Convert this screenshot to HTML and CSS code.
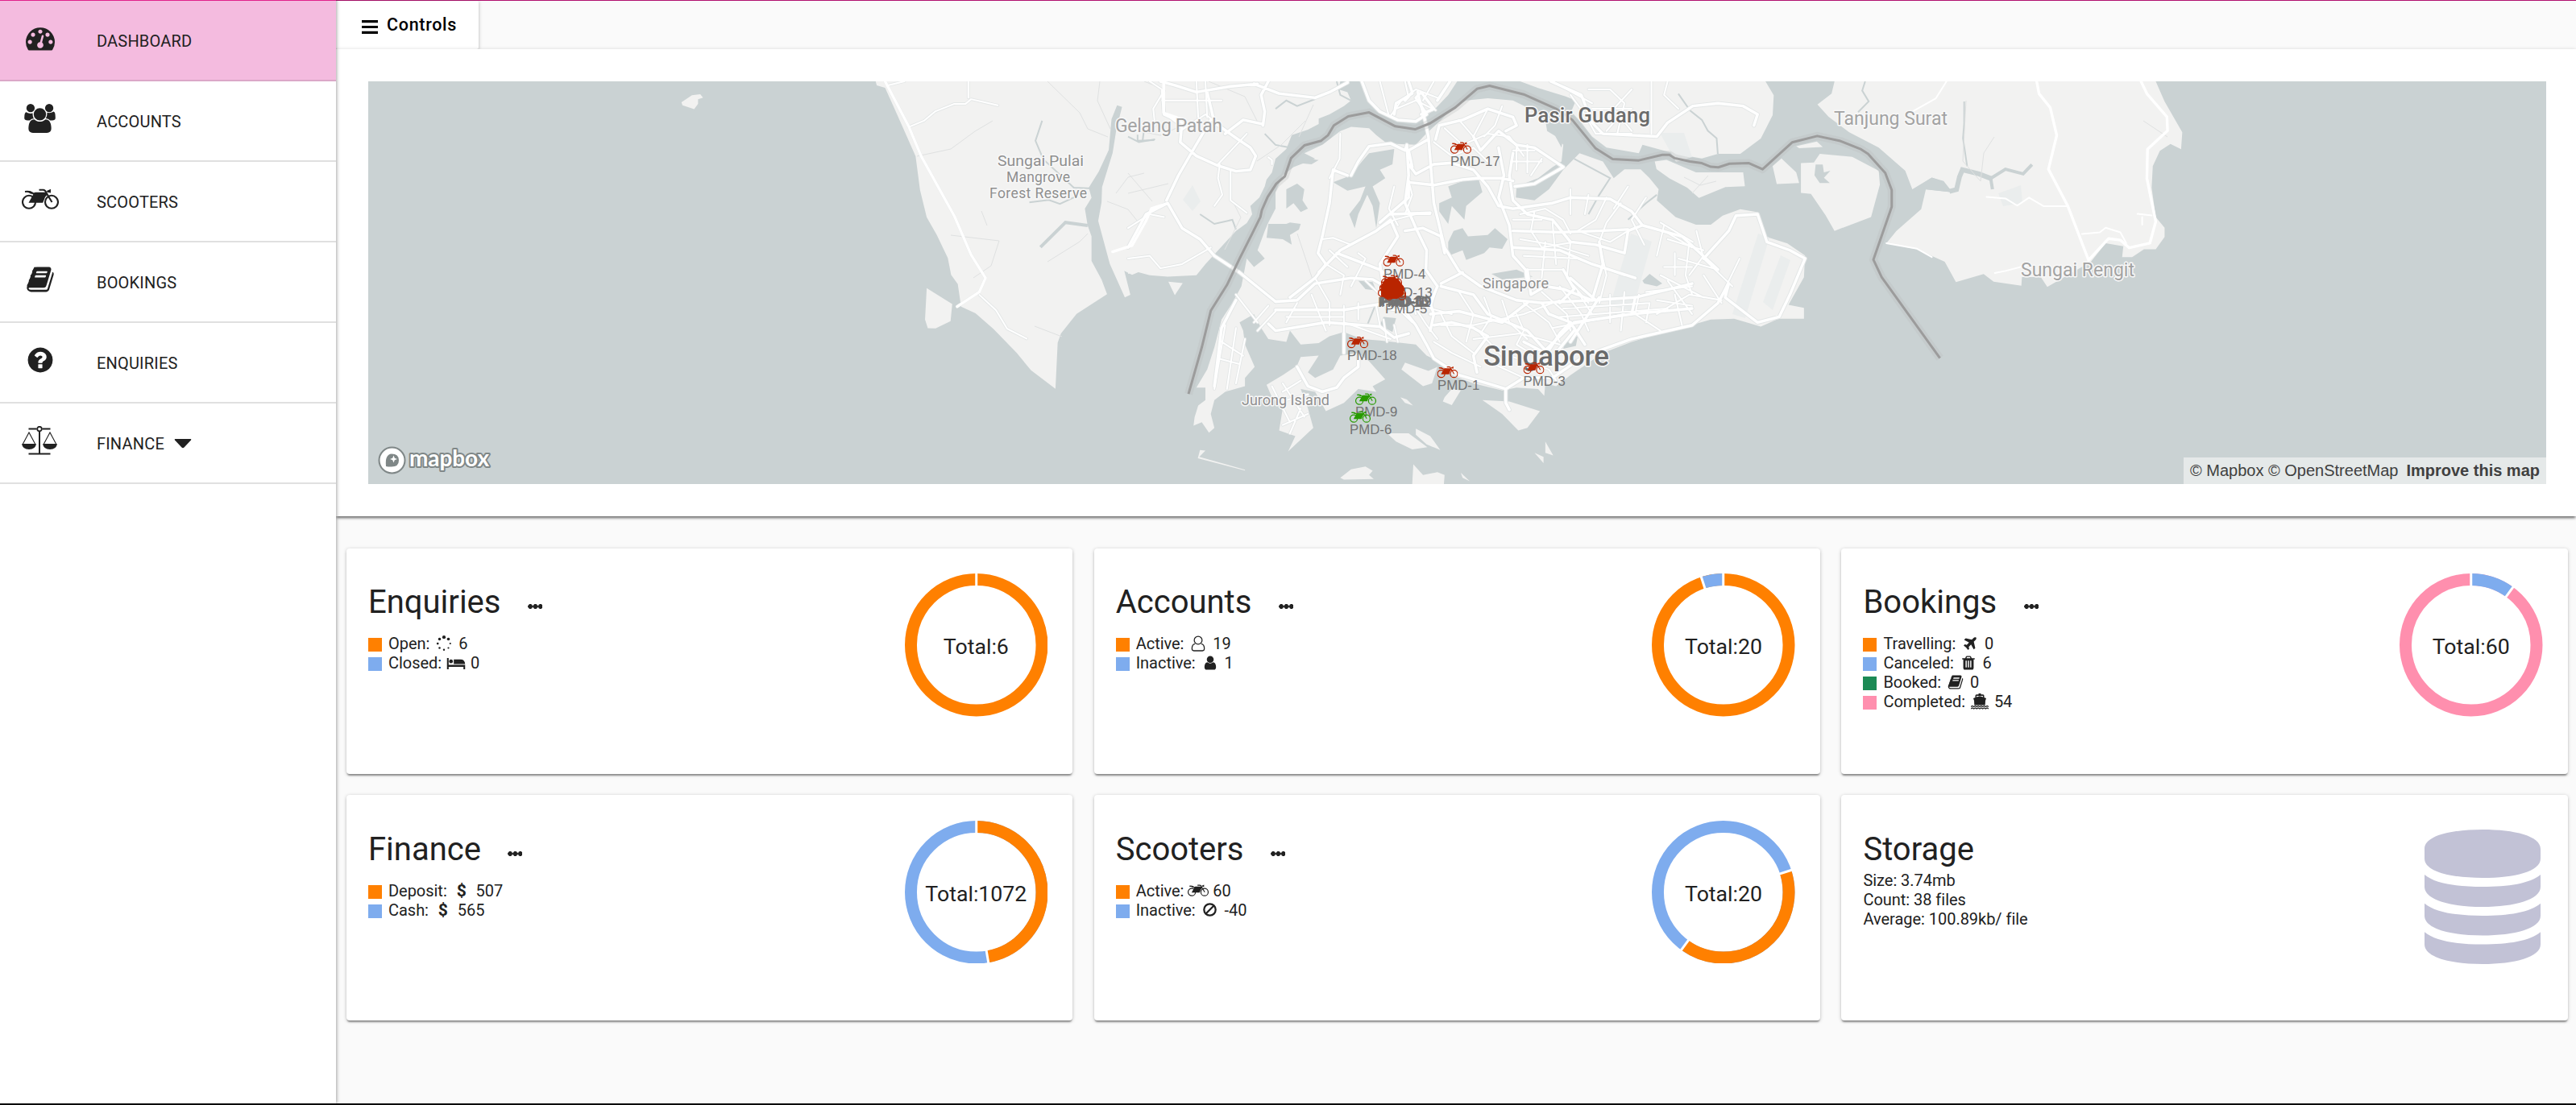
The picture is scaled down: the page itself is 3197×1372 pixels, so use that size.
FILE: index.html
```html
<!DOCTYPE html>
<html lang="en">
<head>
<meta charset="utf-8">
<title>Dashboard</title>
<link rel="stylesheet" href="styles.css">
</head>
<body>
<svg class="sprite" width="0" height="0" aria-hidden="true">
  <symbol id="i-dash" viewBox="0 0 1792 1792"><path fill-rule="evenodd" d="M384 1152q0-53-37.5-90.5t-90.5-37.5-90.5 37.5-37.5 90.5 37.5 90.5 90.5 37.5 90.5-37.5 37.5-90.5zm192-448q0-53-37.5-90.5t-90.5-37.5-90.5 37.5-37.5 90.5 37.5 90.5 90.5 37.5 90.5-37.5 37.5-90.5zm428 481l101-382q6-26-7.5-48.5t-38.5-29.5-48 6.5-30 39.5l-101 382q-60 5-107 43.5t-63 98.5q-20 77 20 146t117 89 146-20 89-117q16-60-6-117t-72-91zm660-33q0-53-37.5-90.5t-90.5-37.5-90.5 37.5-37.5 90.5 37.5 90.5 90.5 37.5 90.5-37.5 37.5-90.5zm-640-640q0-53-37.5-90.5t-90.5-37.5-90.5 37.5-37.5 90.5 37.5 90.5 90.5 37.5 90.5-37.5 37.5-90.5zm448 192q0-53-37.5-90.5t-90.5-37.5-90.5 37.5-37.5 90.5 37.5 90.5 90.5 37.5 90.5-37.5 37.5-90.5zm320 448q0 261-141 483-19 29-54 29h-1402q-35 0-54-29-141-221-141-483 0-182 71-348t191-286 286-191 348-71 348 71 286 191 191 286 71 348z"/></symbol>
  <symbol id="i-users" viewBox="0 0 1920 1792"><path d="M593 896q-162 5-265 128h-134q-82 0-138-40.5t-56-118.5q0-353 124-353 6 0 43.5 21t97.5 42.5 119 21.5q67 0 133-23-5 37-5 66 0 159 81 293zM1664 1533q0 120-73 189.5t-194 69.5h-874q-121 0-194-69.5t-73-189.5q0-53 3.5-103.5t14-109 26.5-108.5 43-97.5 62-81 85.5-53.5 111.5-20q10 0 43 21.5t73 48 107 48 135 21.5 135-21.5 107-48 73-48 43-21.5q61 0 111.5 20t85.5 53.5 62 81 43 97.5 26.5 108.5 14 109 3.5 103.5zM640 256q0 106-75 181t-181 75-181-75-75-181 75-181 181-75 181 75 75 181zM1344 640q0 159-112.5 271.5t-271.5 112.5-271.5-112.5-112.5-271.5 112.5-271.5 271.5-112.5 271.5 112.5 112.5 271.5zM1920 865q0 78-56 118.5t-138 40.5h-134q-103-123-265-128 81-134 81-293 0-29-5-66 66 23 133 23 59 0 119-21.5t97.5-42.5 43.5-21q124 0 124 353zM1792 256q0 106-75 181t-181 75-181-75-75-181 75-181 181-75 181 75 75 181z"/></symbol>
  <symbol id="i-moto" viewBox="0 0 46 26"><g fill="none" stroke="currentColor" stroke-width="2.1"><circle cx="9" cy="16.8" r="8"/><circle cx="37" cy="16.8" r="8"/><path d="M4 4q7-1 11 3M21.500 1.800h5.500q2.500.4 3.500 3.800L37.500 17M28 10l4-4"/></g><path d="M14.500 5.500L17 4.700h12.800L30.500 7l-4.300 10.800H8.500L14 8zM31 3l5-2.200v4.600l-4.500-.7zM4 3h6l4 2.500-2 1.500z"/></symbol>
  <symbol id="i-book" viewBox="0 0 1792 1792"><path fill-rule="evenodd" d="M1703 478q40 57 18 129l-275 906q-19 64-76.500 107.500t-122.500 43.500h-923q-77 0-148.500-53.500t-99.500-131.500q-24-67-2-127 0-4 3-27t4-37q1-8-3-21.500t-3-19.500q2-11 8-21t16.500-23.500 16.500-23.500q23-38 45-91.500t30-91.500q3-10 .5-30t-.5-28q3-11 17-28t17-23q21-36 42-92t25-90q1-9-2.500-32t.5-28q4-13 22-30.500t22-22.500q19-26 42.500-84.500t27.500-96.500q1-8-3-25.500t-2-26.500q2-8 9-18t18-23 17-21q8-12 16.500-30.500t15-35 16-36 19.500-32 26.500-23.500 36-11.500 47.500 5.500l-1 3q38-9 51-9h761q74 0 114 56t18 130l-274 906q-36 119-71.500 153.500t-128.500 34.500h-869q-27 0-38 15-11 16-1 43 24 70 144 70h923q29 0 56-15.500t35-41.500l300-987q7-22 5-57 38 15 59 43zm-1064 2q-4 13 2 22.500t20 9.500h608q13 0 25.500-9.500t16.500-22.500l21-64q4-13-2-22.500t-20-9.500h-608q-13 0-25.500 9.500t-16.500 22.500zm-83 256q-4 13 2 22.500t20 9.500h608q13 0 25.500-9.500t16.500-22.500l21-64q4-13-2-22.500t-20-9.500h-608q-13 0-25.500 9.500t-16.500 22.500z"/></symbol>
  <symbol id="i-help" viewBox="0 0 1792 1792"><path fill-rule="evenodd" d="M1024 1376v-192q0-14-9-23t-23-9h-192q-14 0-23 9t-9 23v192q0 14 9 23t23 9h192q14 0 23-9t9-23zm256-672q0-88-55.500-163t-138.500-116-170-41q-243 0-371 213-15 24 8 42l132 100q7 6 19 6 16 0 25-12 53-68 86-92 34-24 86-24 48 0 85.500 26t37.500 59q0 38-20 61t-68 45q-63 28-115.500 86.500t-52.500 125.500v36q0 14 9 23t23 9h192q14 0 23-9t9-23q0-19 21.500-49.500t54.500-49.500q32-18 49-28.500t46-35 44.500-48 28-60.500 12.500-81zm384 192q0 209-103 385.500t-279.500 279.500-385.500 103-385.500-103-279.500-279.500-103-385.500 103-385.500 279.500-279.500 385.500-103 385.500 103 279.500 279.500 103 385.500z"/></symbol>
  <symbol id="i-scale" viewBox="0 0 44 36"><g fill="none" stroke="currentColor"><path stroke-width="2" d="M8.500 3.500h10M25.500 3.500h10M22 6.500v28M8.500 34.500h27"/><circle cx="22" cy="3.600" r="2.800" stroke-width="1.800"/><path stroke-width="1.100" d="M1.500 22L9 8l7.500 14M27.500 22L35 8l7.500 14"/></g><path d="M0 22h18q-1 7-9 7t-9-7zM26 22h18q-1 7-9 7t-9-7z"/></symbol>
  <symbol id="i-spin" viewBox="0 0 24 24"><circle cx="12" cy="3.500" r="2.300"/><circle cx="6" cy="6" r="1.900"/><circle cx="18" cy="6" r="2"/><circle cx="3.500" cy="12" r="1.500"/><circle cx="20.500" cy="12" r="1.200"/><circle cx="6" cy="18" r="1.400"/><circle cx="18" cy="18" r="1.200"/><circle cx="12" cy="20.500" r="1.300"/></symbol>
  <symbol id="i-bed" viewBox="0 0 24 16"><path d="M0 1h2.200v9H24v6h-2.200v-3.300H2.200V16H0z"/><circle cx="5.300" cy="5.500" r="2.500"/><path d="M9 3h9q5.500 0 6 6H9z"/></symbol>
  <symbol id="i-user" viewBox="0 0 1792 1792"><path d="M1536 1399q0 109-62.500 187t-150.500 78h-854q-88 0-150.500-78t-62.500-187q0-85 8.500-160.500t31.500-152 58.500-131 94-89 134.500-34.500q131 128 313 128t313-128q76 0 134.500 34.500t94 89 58.500 131 31.500 152 8.500 160.500zm-256-887q0 159-112.500 271.500t-271.500 112.500-271.500-112.500-112.500-271.500 112.500-271.500 271.500-112.500 271.500 112.500 112.500 271.500z"/></symbol>
  <symbol id="i-user-o" viewBox="0 0 20 22"><g fill="none" stroke="currentColor" stroke-width="1.400"><path d="M5.800 11.500C2 12 1.500 15.500 1.500 18.300q0 2.700 2.500 2.700h12q2.500 0 2.500-2.700c0-2.800-.5-6.300-4.300-6.800"/><circle cx="10" cy="6.500" r="5.400"/></g></symbol>
  <symbol id="i-plane" viewBox="0 0 1792 1792"><path d="M1568 224q44 52 12 148t-108 172l-161 161 160 696q5 19-12 33l-128 96q-7 6-19 6-4 0-7-1-15-3-21-16l-279-508-259 259 53 194q5 17-8 31l-96 96q-9 9-23 9h-2q-15-2-24-13l-189-252-252-189q-11-7-13-23-1-13 9-25l96-97q9-9 23-9 6 0 8 1l194 53 259-259-508-279q-14-8-17-24-2-16 9-27l128-128q14-13 30-8l665 159 160-160q76-76 172-108t148 12z"/></symbol>
  <symbol id="i-trash" viewBox="0 0 1792 1792"><path fill-rule="evenodd" d="M704 1376v-704q0-14-9-23t-23-9h-64q-14 0-23 9t-9 23v704q0 14 9 23t23 9h64q14 0 23-9t9-23zm256 0v-704q0-14-9-23t-23-9h-64q-14 0-23 9t-9 23v704q0 14 9 23t23 9h64q14 0 23-9t9-23zm256 0v-704q0-14-9-23t-23-9h-64q-14 0-23 9t-9 23v704q0 14 9 23t23 9h64q14 0 23-9t9-23zm-544-992h448l-48-117q-7-9-17-11h-317q-10 2-17 11zm928 32v64q0 14-9 23t-23 9h-96v948q0 83-47 143.500t-113 60.500h-832q-66 0-113-58.500t-47-141.500v-952h-96q-14 0-23-9t-9-23v-64q0-14 9-23t23-9h309l70-167q15-37 54-63t79-26h320q40 0 79 26t54 63l70 167h309q14 0 23 9t9 23z"/></symbol>
  <symbol id="i-ship" viewBox="0 0 22 20"><path d="M9.500 0h3v1.300H15q1.500 0 1.500 1.500V5l2.500 1-1 3-.3 5.500H4.300L4 9 3 6l2.500-1V2.800Q5.500 1.300 7 1.300h2.500zM7 3v1.500l4-1.300 4 1.300V3z"/><path fill="none" stroke="currentColor" stroke-width="1.200" d="M0 16.500l1.800-1 1.800 1 1.900-1 1.800 1 1.800-1 1.900 1 1.800-1 1.800 1 1.900-1 1.800 1 1.800-1 1.900 1M0 19l1.800-1 1.800 1 1.900-1 1.800 1 1.800-1 1.900 1 1.800-1 1.800 1 1.900-1 1.800 1 1.800-1 1.900 1"/></symbol>
  <symbol id="i-ban" viewBox="0 0 18 18"><g fill="none" stroke="currentColor" stroke-width="2.400"><circle cx="9" cy="9" r="7.600"/><path d="M14 4L4 14"/></g></symbol>
</svg>

<div class="app">
  <nav class="side">
    <a class="item active"><span class="ico"><svg width="36" height="36"><use href="#i-dash"/></svg></span><span class="label">DASHBOARD</span></a>
    <a class="item"><span class="ico"><svg width="39" height="36"><use href="#i-users"/></svg></span><span class="label">ACCOUNTS</span></a>
    <a class="item"><span class="ico"><svg width="46" height="26"><use href="#i-moto"/></svg></span><span class="label">SCOOTERS</span></a>
    <a class="item"><span class="ico"><svg width="36" height="36"><use href="#i-book"/></svg></span><span class="label">BOOKINGS</span></a>
    <a class="item"><span class="ico"><svg width="36" height="36"><use href="#i-help"/></svg></span><span class="label">ENQUIRIES</span></a>
    <a class="item"><span class="ico scale"><svg width="44" height="36"><use href="#i-scale"/></svg></span><span class="label">FINANCE</span><svg class="caret" width="22" height="12" viewBox="0 0 22 12"><path d="M1.500 0h19q1.500 0 .5 1.500l-8.500 9q-1.500 1.500-3 0L1 1.500Q0 0 1.500 0z"/></svg></a>
  </nav>

  <main class="main">
    <header class="tabs">
      <button class="tab"><svg width="20" height="17" viewBox="0 0 20 17"><path d="M0 0h20v3.200H0zM0 6.900h20v3.200H0zM0 13.800h20V17H0z"/></svg>Controls</button>
    </header>

    <section class="panel">
      <div class="map">
        <svg class="canvas" width="2703" height="500" viewBox="457 101 2703 500">
          <defs>
            <g id="west">
              <path d="M968 107L970 120 985 128 1003 200 1040 350 1048 460 1060 548 1078 605 1098 680 1104 735 1116 765 1122 838 1148 860 1180 910 1222 988 1248 1045 1292 1105 1296 955 1302 925 1330 862 1385 798 1375 750 1357 690 1357 610 1350 575 1345 520 1357 485 1352 452 1370 400 1388 330 1393 230 1403 185 1412 190 1402 260 1395 340 1376 450 1375 500 1369 560 1390 700 1417 808 1427 800 1416 722 1430 735 1443 725 1443 107z"/>
              <path d="M618 175L637 152 652 149 657 160 648 165 648 180 641 197 620 185zM1060 778L1106 830 1103 885 1076 909 1062 908 1057 880z"/>
            </g>
            <g id="centre">
              <path d="M0 61V755L25 748 60 760 110 765 190 760 215 720 300 600 330 572 345 540 340 510 365 480 380 440 385 415 400 390 410 340 440 305 455 255 500 235 530 215 530 195 560 180 600 150 620 130 610 100 585 90 590 61z"/>
              <path d="M650 61L665 130 700 175 750 200 800 210 850 165 890 110 915 61z"/>
              <path d="M1090 61L1140 85 1215 115 1245 130 1232 170 1260 210 1290 260 1330 300 1420 320 1430 290 1522 322 1595 339 1640 322 1702 322 1759 267 1792 183 1795 111 1772 61z"/>
              <path d="M590 240L620 225 670 230 690 255 720 285 800 290 825 255 870 200 900 160 940 130 1000 122 1070 130 1110 155 1160 200 1165 240 1190 260 1210 290 1205 350 1180 370 1140 410 1080 440 1078 480 1130 490 1170 450 1210 380 1255 320 1320 350 1350 410 1380 378 1425 378 1450 410 1475 450 1470 490 1522 550 1579 578 1620 578 1653 545 1702 522 1751 533 1776 622 1833 645 1882 689 1879 767 1836 867 1879 878 1879 917 1808 917 1759 945 1685 917 1620 920 1538 950 1490 965 1400 1000 1320 1040 1230 1120 1190 1160 1160 1150 1157 1195 1140 1170 1080 1165 1040 1175 960 1150 900 1120 880 1080 830 1050 800 1010 700 995 650 990 600 965 560 980 530 1005 480 1010 450 960 440 1000 390 990 370 950 350 900 310 930 320 960 325 1010 352 1090 325 1130 325 1160 270 1180 240 1210 230 1260 240 1310 225 1328 205 1290 182 1302 185 1272 195 1230 215 1210 215 1165 190 1165 220 1100 240 1020 260 920 290 860 315 800 330 700 350 730 380 700 360 670 380 600 390 570 410 520 410 460 430 400 460 370 520 340 490 320 540 290z"/>
              <path d="M385 1155L430 1120 470 1085 480 1055 530 1050 500 1110 520 1130 570 1100 590 1050 640 1040 670 1070 715 1135 680 1160 690 1180 640 1170 600 1220 550 1250 520 1180 480 1170 500 1240 515 1310 445 1395 465 1340 420 1320 430 1240 400 1200z"/>
              <path d="M760 1100L770 1075 835 1105 860 1090 845 1150 820 1160zM880 1200L900 1170 925 1175 900 1228 875 1215zM985 1210L1060 1215 1145 1250 1110 1310 1085 1320 1040 1260zM757 1200L775 1208 792 1230 770 1220zM720 1330L780 1330 832 1380 790 1388 745 1360zM800 1313L840 1340 868 1390 830 1370 800 1335zM590 1490L620 1460 660 1450 680 1465 670 1480 683 1495 600 1497zM793 1442L820 1480 860 1470 880 1480 878 1513 790 1513zM925 1472L950 1503 930 1490zM1160 1360L1182 1410 1160 1400zM1130 1400L1155 1415 1155 1437zM112 783L152 788 130 832zM200 1390L215 1392 198 1415 325 1461 325 1464 194 1420z"/>
            </g>
            <g id="east">
              <path d="M5 315L25 310 75 350 155 350 158 395 125 398 80 433 60 400 30 370 8 340zM220 305L245 350 250 385 212 388 205 330zM253 320L275 318 285 290 340 300 385 345 387 390 372 495 310 540 295 490 270 420 253 417zM245 265L280 250 290 268 250 272z"/>
              <path d="M310 55L305 95 281 130 300 170 335 220 385 270 430 345 442 405 475 367 495 378 510 415 465 405 457 470 415 540 398 580 450 600 497 640 516 706 563 680 580 705 627 718 628 690 660 690 671 722 700 690 745 640 770 580 800 590 798 625 815 625 835 600 855 600 870 560 870 530 855 495 848 400 850 330 862 280 880 258 898 275 900 220 870 120 855 55z"/>
            </g>
            <g id="minor">
              <path d="M60 61L100 95 70 160 75 220M190 61L195 190M215 61L220 190M95 130H260M145 240L215 180 300 265M100 175L145 220M250 360L330 250M390 335L400 345V360M240 510L262 470 250 410 255 360M285 380V490L330 535M0 590L60 540 100 550M0 700L60 690 90 735 150 720 230 660M700 61L725 185M770 61L780 120M850 61L820 130M745 160L800 130 855 165M730 185L760 130 800 90 860 120"/>
              <path d="M590 250L588 340 560 410M740 440L725 520 750 580M690 600L740 560 800 540H840M780 420L790 470 770 540M850 280L900 330 960 300 1000 350M880 230L930 290 1000 250 1060 260 1100 330M920 200L960 260 1000 160M1040 150L1020 220 990 260M1070 310H1130M1065 350H1150M1080 300V380M1110 290V390M1150 340L1120 400M1090 540L1160 520 1210 560 1230 610M1130 530L1120 600 1150 660 1240 640M1090 630L1180 650 1280 690M1180 570L1190 720M1230 450V540M1280 470L1270 540M1330 480L1300 560 1250 600M1370 500L1330 570 1310 640M1390 440L1350 520M1440 480L1400 560 1435 650M1250 600L1340 640 1390 600M1100 690L1250 700 1380 760M1160 640L1150 770M1230 640L1220 770 1280 860M1310 640L1330 760 1310 860M1110 740H1210M1070 560H1150"/>
              <path d="M860 800L840 880 900 900M870 900L900 980 960 1040M920 820L960 900 940 1000M990 840L1010 910 980 970 1040 1050M1040 850L1060 930 1110 990M870 940L960 940 1100 900 1200 850M850 1000L900 1040 980 1090M1080 900L1100 960 1080 1010 1130 1050M1100 860L1170 930 1200 1000M1150 820L1220 900 1230 960M1200 800L1260 900 1280 960M1250 820L1290 900M1340 830V930M1380 820L1370 960M1420 830L1410 900 1480 960M1450 860L1440 930M1060 1050L1170 1100 1190 1140M1000 1070L1100 1130M960 990L1090 970 1200 1010M1210 880L1450 860M1200 910L1500 880M1180 950L1380 900"/>
              <path d="M470 860L440 930M510 830L550 960M560 860V940M600 870V965M640 860V920M690 870L700 940M440 910H600M600 930L730 990M620 800L660 700 640 680M550 720L600 760 590 830M520 770L560 860M560 670L610 730M540 630L570 625 620 650M710 920L720 1000M740 940L750 1000M270 940L240 1170M300 950L275 1170M325 990L300 1150M260 1000L320 1050M250 1060L310 1080M360 960L410 890M350 930L390 870M300 830L360 930M800 880L830 940 860 990M750 880L790 930M790 850L800 900M660 780L700 830"/>
              <path d="M1480 570L1570 640M1490 600L1568 660M1500 630L1600 670M1520 680V760M1560 640L1550 760 1568 830M1490 730H1568M1440 820L1568 800M1470 850L1568 870M1500 780L1568 900M1580 600L1600 700 1680 800M1530 700L1640 740M1600 760L1650 860M1480 760L1600 840M1490 580L1470 690M1700 700L1640 860M1520 830L1540 940M1600 690L1560 760M1470 900L1560 830 1650 850"/>
              <path d="M400 1160L450 1290M430 1150L490 1270M430 1180L480 1140M440 1210L500 1190M430 1300L500 1260M450 1330L480 1240"/>
              <path d="M1230 110L1270 180 1300 250H1400M1280 90L1340 90 1380 140 1360 250M1400 90L1350 160 1400 240M1455 61V250M1500 61L1490 110 1530 160M1290 160H1400M1330 240L1370 180M1180 61L1290 140"/>
            </g>
            <g id="major">
              <path d="M90 61L130 75 190 100 280 80 360 70M95 95L100 180 150 210 145 280 190 330 250 365 300 385 340 380 355 330 340 300 300 265 240 210 220 100M270 250L320 200 375 215M390 61L370 110 380 170 375 220M230 200L180 310 140 400 107 490M0 660L50 540 110 500 150 590 200 630 240 690 310 750 410 855M350 70L420 105 520 120 560 100 610 65M650 61L670 130 700 170 750 200 800 205 830 180 800 120 815 100 850 160 815 180M780 61L790 100 770 130M860 130L895 61M740 180L745 140 790 105"/>
              <path d="M805 100L825 200 835 260 850 500 880 660 920 745 980 800 1080 850 1150 860 1290 850 1410 840 1568 790M610 400L570 380 560 500 540 620 528 680 550 720 520 770 450 840M620 400L640 350 670 295 730 285 770 310 775 290 780 400 770 500 800 590 830 670 828 740 860 800 840 860 850 900 840 960M780 425L850 435 930 415 970 410 1040 410 1070 420M780 360L800 395 850 360 900 355 960 380 1000 440 1030 510 1070 520 1180 500 1230 480 1340 485 1400 530 1430 580 1540 620 1640 740M835 270L780 310 790 370M855 270L865 220 930 200 1000 160 1070 190 1080 220 1050 240M960 260L980 310 1030 240 1080 290 1130 300 1210 370M1030 300L1045 400 1030 480 1060 580 1070 690 1105 740 1110 800M1070 320L1060 400 1070 490 1110 540 1180 560 1230 640 1300 650 1380 680 1390 600 1430 580M1210 370L1130 430 1075 440"/>
              <path d="M410 885H600L720 860 740 860M390 935L410 960 550 930 650 940 700 945 740 985 780 970M410 855L470 850 520 790 620 770 680 775 700 790M580 680L700 740 720 760M530 750L590 670 690 600 730 560 750 620 720 680 700 720 710 800 720 880 770 890 800 940 830 1010 850 1060 920 1120 1000 1150 1050 1170 1100 1130 1180 1130M730 540L840 535M770 600L820 590 870 620 880 680M700 570L780 480 780 420M1070 600L1200 605 1310 600 1390 595M1070 660L1200 670 1290 720 1410 770M1110 740L1120 830 1160 800 1210 810 1290 850M1150 860L1170 900 1230 930 1270 1010M600 970V1040M840 900L920 890 1040 930 1110 860M850 940L900 930 960 950 1000 980 960 1050 970 1110M930 750L870 790M870 800L960 830 1000 900 1110 960 1160 1030 1240 930 1400 900 1568 880M1180 1130L1270 1050 1400 990 1568 940 1640 860 1670 790 1660 840 1750 930 1810 910 1840 830 1882 700 1840 670 1776 640 1750 540 1690 545 1670 600 1600 700"/>
              <path d="M470 1090L500 1160 540 1180 580 1165 600 1130 640 1090V1050M1050 1170V1220L1060 1245M240 1160L260 950 300 850M1175 61L1260 110 1290 210 1320 250 1470 260 1500 210 1570 150 1640 140 1710 150 1750 180 1740 220M1170 1030L1200 970 1230 930M1160 1040L1100 1000M1190 1040L1240 960M1310 840L1230 1000M1410 840L1400 900M1230 770L1300 850M1310 640L1320 720 1290 850M1210 740L1240 810 1200 860"/>
            </g>
            <clipPath id="clip"><rect x="457" y="101" width="2703" height="500"/></clipPath>
          </defs>
          <g clip-path="url(#clip)">
            <g class="land">
              <use href="#west" transform="translate(420 60) scale(.68878 .38265)"/>
              <use href="#centre" transform="translate(1400 80) scale(.44643 .34439)"/>
              <use href="#east" transform="translate(2050 80) scale(.73151 .38265)"/>
            </g>
            <g class="water">
              <g transform="translate(420 60) scale(.68878 .38265)">
                <path class="creek" d="M1268 235L1256 300 1270 360 1300 410 1325 452 1360 455M1245 500L1280 492 1300 505 1330 480"/>
                <path class="creek wide" d="M1265 645L1310 565 1350 575"/>
                <path class="creek" d="M1440 280V300L1470 298"/>
              </g>
              <g transform="translate(1400 80) scale(.44643 .34439)">
                <path d="M440 450L470 430 490 450 485 490 500 520 480 532 460 500 440 520zM390 575H440L450 570 480 575 475 595 450 615 455 650 430 630 385 625zM570 425L620 400 650 350 670 320 740 305 735 360 700 380 715 410 680 440 700 500 690 590 680 510 665 470 640 540 630 590 615 540 645 490 660 440 610 455 590 440zM470 335L530 345 510 360 470 355zM865 500L900 480 890 440 930 420 975 415 985 460 940 510 935 560 900 510 890 575 865 530zM905 600L930 590 945 620 1000 615 1020 590 1055 630 1040 665 1005 660 990 680 940 705 930 670 890 690 890 640zM1010 755L1080 740 1125 765 1040 775zM640 780L680 785 690 815 660 810zM710 910L745 915 735 965 700 940zM1430 780L1450 755 1485 790 1470 800 1435 790zM1215 990L1250 980 1245 1015 1210 1025zM1180 240L1210 260 1205 300z"/>
                <path class="creek" d="M200 540L240 575 290 560 300 595M410 160L440 130 470 150 520 125M380 250L410 290 450 300M0 260L30 280 75 270M1240 340L1340 410 1310 470 1280 540M690 860L665 940M580 61L590 110 620 130M1390 560L1440 500 1470 470M40 280L45 230"/>
              </g>
              <g transform="translate(2050 80) scale(.73151 .38265)">
                <path d="M278 325L290 325 292 350 303 345 292 368 302 385 285 385 276 360zM475 367L495 380 510 415 462 405 442 408z"/>
                <path class="creek river" d="M505 412L517 406 522 365 527 342 555 355 578 372"/>
                <path class="creek wide" d="M578 405L575 370 600 340 630 355 645 325"/>
                <path class="creek" d="M530 120V190L528 240 535 330M362 55L357 85 368 120 350 155M45 95L65 150 85 180 95 215 110 240 112 290"/>
              </g>
            </g>
            <g class="tint">
              <path d="M2150 390l32-100 14 5-30 100zM2188 375l22-58 12 6-22 62zM2060 165h30l10 30-20 6zM1468 248l12-18 10 20-10 12zM2480 240l28-10 2 22-24 4zM1998 380l26-90 26 10-24 86z"/>
            </g>
            <g class="trail">
              <path d="M1138 194L1180 185 1210 163 1232 150M1300 101L1340 140 1350 160 1375 170M1365 101L1362 125 1378 160M1180 292L1240 299 1230 330 1208 345M1300 325L1340 300 1350 290M1218 262L1225 280M1385 240L1400 220 1420 215M1374 250L1400 260 1412 275M1284 405L1318 418M1420 101L1430 105 1440 108M1400 215L1430 250M2440 125L2436 200 2458 225 2462 190 2475 170M2660 150L2690 170"/>
              <path d="M1400 160L1440 168 1480 150M1500 101L1545 120 1560 150M1560 200L1590 180 1620 150M1520 310L1540 270 1530 250M1610 290L1630 350M1400 240L1450 228M1612 170L1630 130M2090 220L2110 230 2130 225M2100 240L2120 218"/>
            </g>
            <g class="roads">
              <g class="casing" transform="translate(1400 80) scale(.44643 .34439)"><use href="#minor"/><use class="w" href="#major"/></g>
              <g class="line" transform="translate(1400 80) scale(.44643 .34439)"><use href="#minor"/><use class="w" href="#major"/></g>
              <g class="casing" transform="translate(420 60) scale(.68878 .38265)">
                <path d="M985 107L1028 255 1050 350 1110 545 1140 670 1166 745 1155 790 1115 838M1155 800L1185 850 1205 910 1240 942M1028 255L1055 235 1075 205 1110 180H1130L1140 165 1188 185M1135 107V160M990 120L1020 107"/>
              </g>
              <g class="line" transform="translate(420 60) scale(.68878 .38265)">
                <path class="w" d="M985 107L1028 255 1050 350 1110 545 1140 670 1166 745 1155 790 1115 838"/>
                <path d="M1155 800L1185 850 1205 910 1240 942M1028 255L1055 235 1075 205 1110 180H1130L1140 165 1188 185M1135 107V160M990 120L1020 107"/>
                <path class="w" d="M1395 660L1430 640 1455 560 1465 520 1490 505M1487 107V210L1520 230"/>
              </g>
              <g class="line" transform="translate(2050 80) scale(.73151 .38265)">
                <path class="w" d="M653 55L657 95 676 140 687 230 673 340 706 460 741 635M830 55L840 95 874 170 875 215 841 275 840 370 855 510 845 580 810 595 795 570 775 565 741 635"/>
                <path d="M500 55L482 110 440 155M568 430L600 435 620 458 640 432 665 460H706M730 550L760 545 770 530 795 545 805 580M398 580L450 598 475 625M582 677L600 670 640 650M824 485L848 490M832 520V495"/>
              </g>
            </g>
            <g transform="translate(1400 80) scale(.44643 .34439)">
              <path class="frontier glow" d="M168 1188L205 1020 230 888 275 795 310 700 345 610 368 550 372 525 388 478 412 430 436 403 453 338 490 292 537 275 556 255 572 220 612 187 670 173 743 223 798 234 840 212 910 155 970 88 1005 77 1100 108 1190 160 1235 200 1300 303 1347 341 1420 346 1485 326 1505 326 1520 338 1562 350 1595 356 1620 369 1641 371 1672 358 1726 356 1764 378 1846 281 1916 258 1980 276 2038 306 2057 322 2105 391 2123 453 2123 513 2072 704 2095 767 2257 1059"/>
              <path class="frontier" d="M168 1188L205 1020 230 888 275 795 310 700 345 610 368 550 372 525 388 478 412 430 436 403 453 338 490 292 537 275 556 255 572 220 612 187 670 173 743 223 798 234 840 212 910 155 970 88 1005 77 1100 108 1190 160 1235 200 1300 303 1347 341 1420 346 1485 326 1505 326 1520 338 1562 350 1595 356 1620 369 1641 371 1672 358 1726 356 1764 378 1846 281 1916 258 1980 276 2038 306 2057 322 2105 391 2123 453 2123 513 2072 704 2095 767 2257 1059"/>
            </g>
            <g class="places">
              <text class="town" x="1384" y="164" textLength="133" font-size="23">Gelang Patah</text>
              <text class="town" x="2276" y="155" textLength="141" font-size="23">Tanjung Surat</text>
              <text class="town" x="2508" y="343" textLength="141" font-size="23">Sungai Rengit</text>
              <text class="area" x="1238" y="205.500" textLength="107" font-size="17.500" lengthAdjust="spacingAndGlyphs" transform="translate(0 0)">Sungai Pulai</text>
              <text class="area" x="1249" y="225.500" textLength="79" font-size="17.500">Mangrove</text>
              <text class="area" x="1228" y="246" textLength="121" font-size="17.500">Forest Reserve</text>
              <text class="area" x="1840" y="358" textLength="82" font-size="18">Singapore</text>
              <text class="area" x="1541" y="503" textLength="109" font-size="18">Jurong Island</text>
              <text class="city" x="1892" y="152" textLength="156" font-size="25.500">Pasir Gudang</text>
              <text class="city" x="1841" y="453.500" textLength="156" font-size="35">Singapore</text>
            </g>
            <g class="pins">
              <g class="tags">
                <text x="1800" y="205.500">PMD-17</text><text x="1717" y="345.500">PMD-4</text><text x="1716" y="368.500">PMD-13</text>
                <text x="1711" y="381">PMD-10</text><text x="1712" y="379.500">PMD-16</text><text x="1714" y="381">PMD-12</text><text x="1713" y="378.500">PMD-8</text><text x="1715" y="380">PMD-19</text><text x="1710" y="381">PMD-11</text>
                <text x="1719" y="388.500">PMD-5</text><text x="1672" y="447">PMD-18</text><text x="1784" y="483.500">PMD-1</text><text x="1890.500" y="479">PMD-3</text>
                <text x="1682" y="517">PMD-9</text><text x="1675" y="539">PMD-6</text>
              </g>
              <g class="red">
                <use href="#i-moto" x="1800" y="174" width="26" height="19"/>
                <use href="#i-moto" x="1716.500" y="314" width="26" height="19"/>
                <use href="#i-moto" x="1714" y="339" width="26" height="19"/>
                <use href="#i-moto" x="1712" y="346" width="26" height="19"/>
                <use href="#i-moto" x="1717" y="347" width="26" height="19"/>
                <use href="#i-moto" x="1710" y="352" width="26" height="19"/>
                <use href="#i-moto" x="1715" y="352" width="26" height="19"/>
                <use href="#i-moto" x="1719" y="353" width="26" height="19"/>
                <use href="#i-moto" x="1719" y="356" width="26" height="19"/>
                <path d="M1714 355l5-9h16l7 10v10l-8 5h-14l-6-4z"/>
                <use href="#i-moto" x="1672" y="415.500" width="26" height="19"/>
                <use href="#i-moto" x="1783.500" y="452.500" width="26" height="19"/>
                <use href="#i-moto" x="1890.500" y="447.500" width="26" height="19"/>
              </g>
              <g class="green">
                <use href="#i-moto" x="1682" y="486" width="26" height="19"/>
                <use href="#i-moto" x="1675" y="508" width="26" height="19"/>
              </g>
            </g>
            <g class="brand">
              <circle cx="486.500" cy="571.500" r="16"/>
              <path class="drop" d="M479 579q-1.500-15 7-15.500 9 0 9 8 0 8-9 8-4 .2-7-.5z"/>
              <path class="star" d="M488.500 565.500l1.300 3.200 3.200 1.300-3.200 1.300-1.300 3.200-1.300-3.200-3.200-1.300 3.200-1.300z"/>
              <text x="508" y="579" textLength="99" font-size="28">mapbox</text>
            </g>
          </g>
        </svg>
        <div class="credit">© Mapbox © OpenStreetMap <b>Improve this map</b></div>
      </div>
    </section>

    <section class="cards">
      <article class="card">
        <div class="info">
          <h2>Enquiries<i class="dots"></i></h2>
          <p><i class="key orange"></i>Open: <span class="mini"><svg width="24" height="22"><use href="#i-spin"/></svg></span> 6</p>
          <p><i class="key blue"></i>Closed: <span class="mini"><svg width="24" height="15"><use href="#i-bed"/></svg></span> 0</p>
        </div>
        <div class="chart">
          <svg viewBox="0 0 178 178"><circle class="arc orange" cx="89" cy="89" r="81.500"/><path class="cut" d="M89 18V-2"/></svg>
          <span>Total:6</span>
        </div>
      </article>
      <article class="card">
        <div class="info">
          <h2>Accounts<i class="dots"></i></h2>
          <p><i class="key orange"></i>Active: <span class="mini"><svg width="18" height="20"><use href="#i-user-o"/></svg></span> 19</p>
          <p><i class="key blue"></i>Inactive: <span class="mini"><svg width="20" height="20"><use href="#i-user"/></svg></span> 1</p>
        </div>
        <div class="chart">
          <svg viewBox="0 0 178 178"><circle class="arc orange" cx="89" cy="89" r="81.500"/><circle class="arc blue" cx="89" cy="89" r="81.500" pathLength="100" stroke-dasharray="5 95" stroke-dashoffset="-95"/><path class="cut" d="M89 18V-2"/><path class="cut" d="M89 18V-2" transform="rotate(342 89 89)"/></svg>
          <span>Total:20</span>
        </div>
      </article>
      <article class="card">
        <div class="info">
          <h2>Bookings<i class="dots"></i></h2>
          <p><i class="key orange"></i>Travelling: <span class="mini"><svg width="20" height="20"><use href="#i-plane"/></svg></span> 0</p>
          <p><i class="key blue"></i>Canceled: <span class="mini"><svg width="20" height="20"><use href="#i-trash"/></svg></span> 6</p>
          <p><i class="key green"></i>Booked: <span class="mini"><svg width="20" height="20"><use href="#i-book"/></svg></span> 0</p>
          <p><i class="key pink"></i>Completed: <span class="mini"><svg width="22" height="20"><use href="#i-ship"/></svg></span> 54</p>
        </div>
        <div class="chart">
          <svg viewBox="0 0 178 178"><circle class="arc pink" cx="89" cy="89" r="81.500"/><circle class="arc blue" cx="89" cy="89" r="81.500" pathLength="100" stroke-dasharray="10 90"/><path class="cut" d="M89 18V-2"/><path class="cut" d="M89 18V-2" transform="rotate(36 89 89)"/></svg>
          <span>Total:60</span>
        </div>
      </article>
      <article class="card">
        <div class="info">
          <h2>Finance<i class="dots"></i></h2>
          <p><i class="key orange"></i>Deposit: <span class="mini"><b>$</b></span> 507</p>
          <p><i class="key blue"></i>Cash: <span class="mini"><b>$</b></span> 565</p>
        </div>
        <div class="chart">
          <svg viewBox="0 0 178 178"><circle class="arc blue" cx="89" cy="89" r="81.500"/><circle class="arc orange" cx="89" cy="89" r="81.500" pathLength="100" stroke-dasharray="47.300 52.700"/><path class="cut" d="M89 18V-2"/><path class="cut" d="M89 18V-2" transform="rotate(170.300 89 89)"/></svg>
          <span>Total:1072</span>
        </div>
      </article>
      <article class="card">
        <div class="info">
          <h2>Scooters<i class="dots"></i></h2>
          <p><i class="key orange"></i>Active: <span class="mini"><svg width="26" height="15"><use href="#i-moto"/></svg></span> 60</p>
          <p><i class="key blue"></i>Inactive: <span class="mini"><svg width="17" height="17"><use href="#i-ban"/></svg></span> -40</p>
        </div>
        <div class="chart">
          <svg viewBox="0 0 178 178"><circle class="arc blue" cx="89" cy="89" r="81.500"/><circle class="arc orange" cx="89" cy="89" r="81.500" pathLength="100" stroke-dasharray="40 60" stroke-dashoffset="-20"/><path class="cut" d="M89 18V-2" transform="rotate(72 89 89)"/><path class="cut" d="M89 18V-2" transform="rotate(216 89 89)"/></svg>
          <span>Total:20</span>
        </div>
      </article>
      <article class="card storage">
        <div class="info">
          <h2>Storage</h2>
          <p>Size: 3.74mb</p>
          <p>Count: 38 files</p>
          <p>Average: 100.89kb/ file</p>
        </div>
        <svg class="disk" width="144" height="167" viewBox="0 0 144 167"><path d="M0 24C0 8 32 0 72 0s72 8 72 24v12c0 16-32 24-72 24S0 52 0 36zM0 56c13 11 40 15 72 15s59-4 72-15v15c0 16-32 25-72 25S0 87 0 71zM0 91.700c13 11 40 15.300 72 15.300s59-4.300 72-15.300V107c0 16-32 24.500-72 24.500S0 123 0 107zM0 127.300c13 11 40 15.300 72 15.300s59-4.300 72-15.300v15.200c0 16-32 24.500-72 24.500s-72-8.500-72-24.500z"/></svg>
      </article>
    </section>
  </main>
</div>
</body>
</html>
```

FILE: styles.css
```css
* { box-sizing: border-box; }
body { margin: 0; background: #fafafa; color: #212121; font-family: Roboto, "Liberation Sans", sans-serif; font-size: 20px; line-height: 24px; }
svg { display: block; fill: currentColor; }
.sprite { position: absolute; }
.app { display: grid; grid-template-columns: 417px 1fr; height: 1372px; border-bottom: 2px solid #060505; overflow: hidden; }

/* Sidebar */
.side { position: relative; z-index: 2; background: #fff; border-top: 1px solid #e0218a; box-shadow: 1px 0 4px rgba(0,0,0,.35); }
.item { display: flex; align-items: center; height: 100px; border-bottom: 2px solid #e0e0e0; }
.active { background: #f4bbdf; border-color: #dba8c8; }
.ico { display: flex; justify-content: center; align-items: center; width: 51px; height: 40px; margin: -6px 45px 0 24px; }
.ico.scale { margin-left: 23px; margin-right: 46px; }
.label { padding-top: 2px; letter-spacing: .19px; }
.caret { margin: 1px 0 0 12px; }

/* Top tab strip */
.main { display: flex; flex-direction: column; min-width: 0; border-top: 1px solid #b0106e; }
.tabs { display: flex; height: 60px; background: #fafafa; }
.tab { display: flex; align-items: center; gap: 11px; width: 177px; padding: 0 0 0 32px; border: 0; border-radius: 2px; background: #fff; color: #000; font: 500 21.500px/24px Roboto, sans-serif; letter-spacing: .7px; box-shadow: 0 1px 4px rgba(0,0,0,.3); }
.tab svg { margin-top: 4px; }

/* Map panel */
.panel { position: relative; padding: 40px 37px 40px 40px; background: #fff; box-shadow: 0 3px 3px -1px rgba(0,0,0,.5), 0 1px 5px rgba(0,0,0,.2); }
.map { position: relative; height: 500px; background: #cad2d3; overflow: hidden; }
.land { fill: #f2f2f1; }
.water { fill: #cad2d3; }
.creek { fill: none; stroke: #cad2d3; stroke-width: 2; vector-effect: non-scaling-stroke; }
.creek.wide { stroke-width: 4; }
.creek.river { stroke-width: 6; }
.tint { fill: #eaeded; }
.trail { fill: none; stroke: #dfe1e1; stroke-width: 1; }
.roads { fill: none; stroke-linejoin: round; stroke-linecap: round; }
.roads path, #minor path, #major path { vector-effect: non-scaling-stroke; }
.casing { stroke: #e4e7e7; stroke-width: 3.800px; }
.casing .w { stroke-width: 5.400px; }
.line { stroke: #fff; stroke-width: 2px; }
.line .w { stroke-width: 3.400px; }
.frontier { fill: none; stroke: #9c9c9c; stroke-width: 3px; stroke-linejoin: round; vector-effect: non-scaling-stroke; }
.frontier.glow { stroke: #b9bcbc; stroke-opacity: .3; stroke-width: 10px; }
.places { font-family: Roboto, sans-serif; paint-order: stroke; stroke: #f8f8f8; stroke-width: 3px; stroke-linejoin: round; }
.town { fill: #a3a3a3; }
.area { fill: #8f8f8f; }
.city { fill: #6b6b6b; font-weight: 500; }
.tags { font: 16.800px "Liberation Sans", Arial, sans-serif; fill: #737373; }
.red { color: #b92500; fill: #b92500; }
.green { color: #289b00; fill: #289b00; }
.brand { fill: #fff; stroke: #7f8787; stroke-width: 2px; }
.brand .drop { fill: #7f8787; stroke: none; }
.brand .star { stroke: none; }
.brand text { font-family: Lato, sans-serif; font-weight: 700; paint-order: stroke; stroke-width: 4px; stroke-linejoin: round; }
.credit { position: absolute; right: 0; bottom: 0; width: 450px; height: 33px; padding: 4px 8px; background: rgba(255,255,255,.5); color: #404040; font: 20px/25px "Liberation Sans", Arial, sans-serif; white-space: nowrap; display: flex; justify-content: space-between; }

/* Summary cards */
.cards { display: grid; grid-template-columns: repeat(3, 1fr); grid-auto-rows: 280px; gap: 26.300px 26.600px; padding: 40px 10.500px 0 13px; }
.card { display: flex; justify-content: space-between; align-items: flex-start; padding: 0 31px 0 27px; background: #fff; border-radius: 4px; box-shadow: 0 3px 2px -1px rgba(0,0,0,.35), 0 1px 4px rgba(0,0,0,.25); }
.card:nth-child(n+4) { padding-top: .7px; }
.info { padding-top: 43px; }
h2 { display: flex; margin: 0 0 15px; font-size: 40px; line-height: 48px; font-weight: 400; }
.storage h2 { margin-bottom: 2px; }
p { display: flex; margin: 0; white-space: pre; letter-spacing: -.03px; }
.key { width: 17px; height: 17px; margin: 5px 8px 0 0; }
.key.orange { background: #ff8000; }
.key.blue { background: #7eacee; }
.key.green { background: #1c8a55; }
.key.pink { background: #ff8fae; }
.mini { display: flex; justify-content: center; align-items: center; width: 26px; }
.mini b { font-size: 21px; }
.dots { width: 18px; height: 6px; margin: 26px 0 0 33.500px; background: radial-gradient(circle at 50% 50%, #212121 2.700px, transparent 3.200px) 0 0 / 6.300px 6px; }
.chart { display: grid; margin-top: 31px; }
.chart > * { grid-area: 1 / 1; }
.chart svg { width: 177.500px; height: 177.500px; }
.chart span { place-self: center; padding-top: 5px; font-size: 26.700px; line-height: 32px; }
.arc { fill: none; stroke-width: 15px; transform: rotate(-90deg); transform-origin: 89px 89px; }
.arc.orange { stroke: #ff8000; }
.arc.blue { stroke: #7eacee; }
.arc.pink { stroke: #ff8fae; }
.cut { stroke: #fff; stroke-width: 3px; }
.disk { margin: 42px 3px 0 0; color: #c2c2d6; }
```
